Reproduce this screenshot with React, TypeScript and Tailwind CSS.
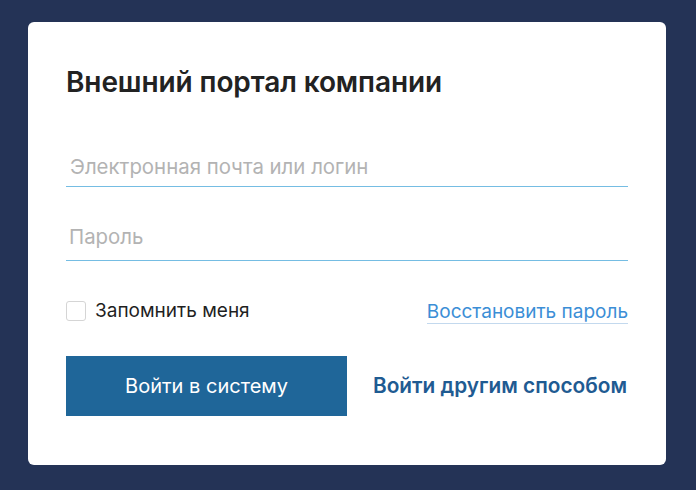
import React from "react";

export default function App() {
    return (
        <div className="w-[696px] h-[490px] bg-[#243356] pt-[22px] pl-[28px]" style={{ fontFamily: "Inter, Roboto, sans-serif" }}>
            <div className="w-[638px] h-[443px] bg-white rounded-[6px] pl-[38px] pr-[38px] pt-[43px]">
                <h1 className="text-[28px] leading-[34px] font-semibold text-[#222] tracking-[-0.1px]">
                    Внешний портал компании
                </h1>

                <div className="mt-[36px] flex flex-col">
                    <div className="h-[52px] flex items-end border-b border-[#75bde3] pb-[3px]">
                        <input
                            className="w-full outline-none text-[20.4px] text-[#333] placeholder:text-[#b3b3b3] pl-[4px]"
                            placeholder="Электронная почта или логин"
                        />
                    </div>
                    <div className="h-[52px] mt-[22px] flex items-end border-b border-[#75bde3] pb-[7px]">
                        <input
                            className="w-full outline-none text-[20.4px] text-[#333] placeholder:text-[#b3b3b3] pl-[3px]"
                            placeholder="Пароль"
                            type="password"
                        />
                    </div>
                </div>

                <div className="mt-[36px] flex items-center justify-between">
                    <label className="flex items-center gap-[9px]">
                        <span className="w-[20px] h-[20px] rounded-[3px] border border-[#d5d5d5] bg-white" />
                        <span className="text-[19px] text-[#1f1f1f]">Запомнить меня</span>
                    </label>
                    <a className="text-[19px] text-[#3b8ed6] border-b border-[#c3d9ee] leading-[22px] mt-[2px]">
                        Восстановить пароль
                    </a>
                </div>

                <div className="mt-[30px] flex items-center">
                    <button className="w-[281px] h-[60px] bg-[#1f6699] text-white text-[20px]">
                        Войти в систему
                    </button>
                    <a className="ml-[26px] text-[20.8px] font-semibold text-[#1f5b92]">
                        Войти другим способом
                    </a>
                </div>
            </div>
        </div>
    );
}
